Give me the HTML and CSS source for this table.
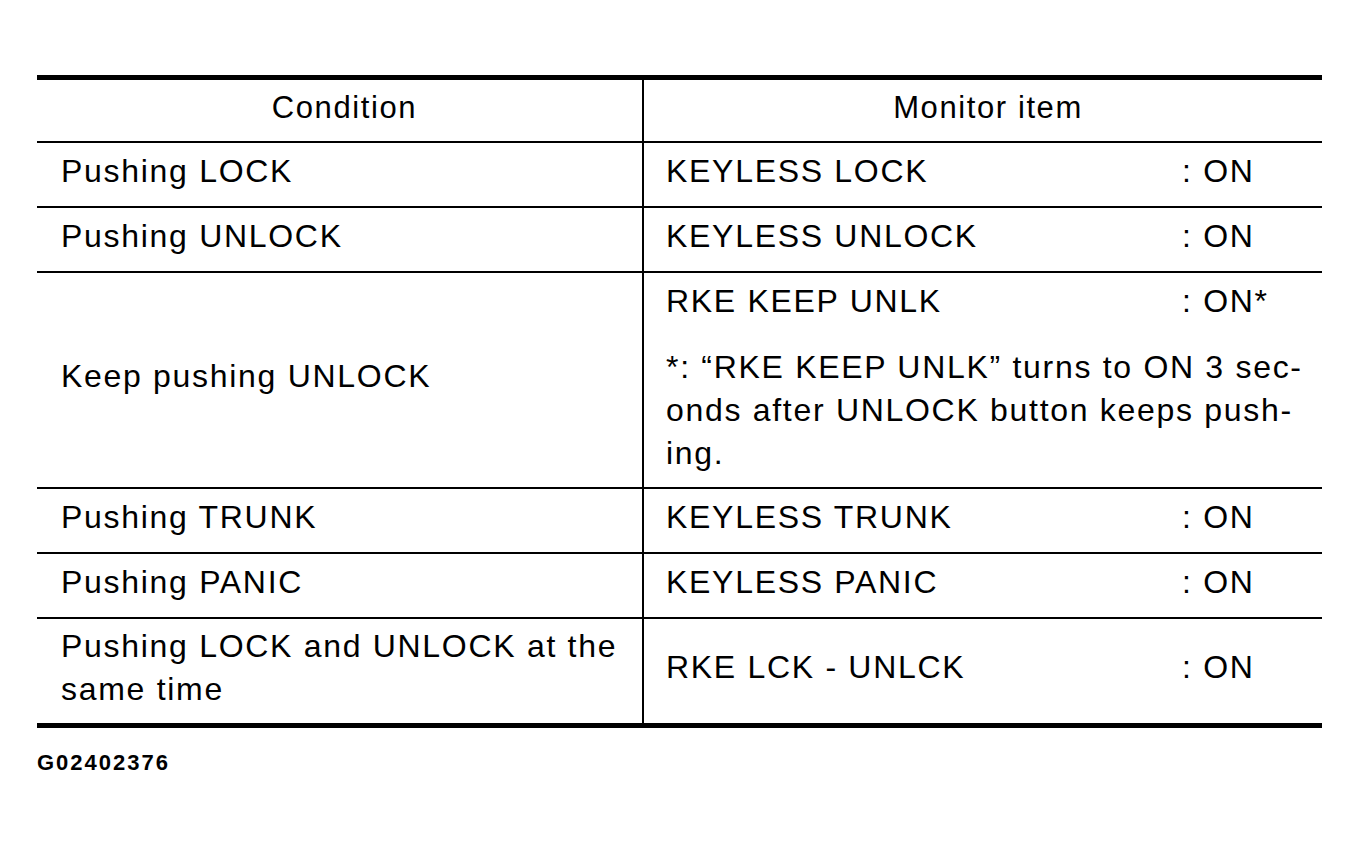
FILE: index.html
```html
<!DOCTYPE html>
<html>
<head>
<meta charset="utf-8">
<link rel="stylesheet" href="styles.css">
</head>
<body>
<div class="sheet">
  <div class="table">
    <div class="row head">
      <div class="c1">Condition</div>
      <div class="c2">Monitor item</div>
    </div>
    <div class="row">
      <div class="c1">Pushing LOCK</div>
      <div class="c2"><span class="item">KEYLESS LOCK</span><span class="val">: ON</span></div>
    </div>
    <div class="row">
      <div class="c1">Pushing UNLOCK</div>
      <div class="c2"><span class="item">KEYLESS UNLOCK</span><span class="val">: ON</span></div>
    </div>
    <div class="row tall">
      <div class="c1">Keep pushing UNLOCK</div>
      <div class="c2 stack">
        <div class="line"><span class="item">RKE KEEP UNLK</span><span class="val">: ON*</span></div>
        <p class="note">*: “RKE KEEP UNLK” turns to ON 3 sec-<br>onds after UNLOCK button keeps push-<br>ing.</p>
      </div>
    </div>
    <div class="row">
      <div class="c1">Pushing TRUNK</div>
      <div class="c2"><span class="item">KEYLESS TRUNK</span><span class="val">: ON</span></div>
    </div>
    <div class="row">
      <div class="c1">Pushing PANIC</div>
      <div class="c2"><span class="item">KEYLESS PANIC</span><span class="val">: ON</span></div>
    </div>
    <div class="row two">
      <div class="c1">Pushing LOCK and UNLOCK at the<br>same time</div>
      <div class="c2"><span class="item">RKE LCK - UNLCK</span><span class="val">: ON</span></div>
    </div>
  </div>
  <div class="code">G02402376</div>
</div>
</body>
</html>
```
FILE: styles.css
```css
html, body {
  margin: 0;
  padding: 0;
  background: #fff;
}

body {
  font-family: "Liberation Sans", Arial, sans-serif;
  color: #000;
}

.sheet {
  padding: 75px 0 0 37px;
}

.table {
  width: 1285px;
  border-top: 5px solid #000;
  border-bottom: 5px solid #000;
  font-size: 32px;
  letter-spacing: 1.7px;
  line-height: 43px;
}

.row {
  display: flex;
  height: 63px;
  border-bottom: 2px solid #000;
}

.row:last-child {
  border-bottom: none;
}

.row.head {
  height: 61px;
  font-size: 31px;
  letter-spacing: 1.6px;
}

.row.tall {
  height: 214px;
}

.row.two {
  height: 104px;
}

.c1,
.c2 {
  display: flex;
  align-items: center;
  padding-bottom: 7px;
  box-sizing: border-box;
}

.c1 {
  width: 607px;
  border-right: 2px solid #000;
  padding-left: 24px;
}

.c2 {
  flex: 1;
  padding-left: 22px;
}

.head .c1,
.head .c2 {
  justify-content: center;
  padding-left: 10px;
}

.item {
  display: inline-block;
  width: 516px;
}

.c2.stack {
  flex-direction: column;
  align-items: flex-start;
  justify-content: flex-start;
  padding-top: 7px;
}

.line {
  display: flex;
}

.note {
  margin: 23px 0 0 0;
}

.code {
  margin-top: 22px;
  font-size: 22px;
  font-weight: bold;
  letter-spacing: 2px;
  line-height: 26px;
}
```
